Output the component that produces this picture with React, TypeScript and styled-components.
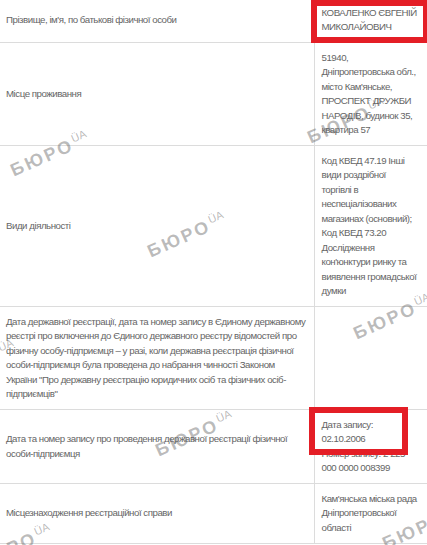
import styled, { createGlobalStyle } from "styled-components";

const GlobalStyle = createGlobalStyle`
  body {
    margin: 0;
    background: #fff;
    overflow: hidden;
  }
`;

const Page = styled.div`
  position: relative;
  width: 427px;
  height: 545px;
  overflow: hidden;
  font-family: "Liberation Sans", Arial, sans-serif;
  font-size: 9.7px;
  letter-spacing: -0.47px;
  color: #656565;
`;

const Table = styled.table`
  border-collapse: collapse;
  table-layout: fixed;
  width: 427px;
  margin-top: -2px;
  font: inherit;
  letter-spacing: inherit;
  color: inherit;
`;

const Row = styled.tr`
  border-bottom: 1px solid #dcdcdc;
`;

const LabelCell = styled.td`
  width: 314px;
  box-sizing: border-box;
  padding: 7.5px 8px 7.5px 6px;
  line-height: 14.5px;
  vertical-align: middle;
`;

const ValueCell = styled.td`
  box-sizing: border-box;
  padding: 7.5px 6px 7.5px 7px;
  line-height: 14.5px;
  vertical-align: middle;
  border-left: 1px solid #dcdcdc;
`;

const ValueLine = styled.div`
  white-space: nowrap;
`;

const Highlight = styled.div<{ $x: number; $y: number; $w: number; $h: number }>`
  position: absolute;
  left: ${(p) => p.$x}px;
  top: ${(p) => p.$y}px;
  width: ${(p) => p.$w}px;
  height: ${(p) => p.$h}px;
  box-sizing: border-box;
  border: 6px solid #e41e26;
  pointer-events: none;
`;

const Watermark = styled.div<{ $x: number; $y: number }>`
  position: absolute;
  left: ${(p) => p.$x}px;
  top: ${(p) => p.$y - 18}px;
  height: 18px;
  line-height: 18px;
  white-space: nowrap;
  transform: rotate(-24deg);
  transform-origin: 0 100%;
  font-family: "Liberation Sans", Arial, sans-serif;
  font-weight: bold;
  font-size: 18px;
  letter-spacing: 2.5px;
  color: rgba(100, 100, 100, 0.44);
  pointer-events: none;

  sup {
    font-size: 11px;
    letter-spacing: 0;
    margin-left: 1px;
    vertical-align: 7px;
    font-weight: normal;
  }
`;

// value lines follow the wrapping of the narrow source column
const rows = [
  {
    label: "Прізвище, ім'я, по батькові фізичної особи",
    value: ["КОВАЛЕНКО ЄВГЕНІЙ", "МИКОЛАЙОВИЧ"],
  },
  {
    label: "Місце проживання",
    value: [
      "51940,",
      "Дніпропетровська обл.,",
      "місто Кам'янське,",
      "ПРОСПЕКТ ДРУЖБИ",
      "НАРОДІВ, будинок 35,",
      "квартира 57",
    ],
  },
  {
    label: "Види діяльності",
    value: [
      "Код КВЕД 47.19 Інші",
      "види роздрібної",
      "торгівлі в",
      "неспеціалізованих",
      "магазинах (основний);",
      "Код КВЕД 73.20",
      "Дослідження",
      "кон'юнктури ринку та",
      "виявлення громадської",
      "думки",
    ],
  },
  {
    label:
      'Дата державної реєстрації, дата та номер запису в Єдиному державному реєстрі про включення до Єдиного державного реєстру відомостей про фізичну особу-підприємця – у разі, коли державна реєстрація фізичної особи-підприємця була проведена до набрання чинності Законом України "Про державну реєстрацію юридичних осіб та фізичних осіб-підприємців"',
    value: [],
  },
  {
    label: "Дата та номер запису про проведення державної реєстрації фізичної особи-підприємця",
    value: ["Дата запису:", "02.10.2006", "Номер запису: 2 225", "000 0000 008399"],
  },
  {
    label: "Місцезнаходження реєстраційної справи",
    value: ["Кам'янська міська рада", "Дніпропетровської", "області"],
  },
];

const marks = [
  { x: 13, y: 175 },
  { x: 150, y: 256 },
  { x: 310, y: 142 },
  { x: 356, y: 338 },
  { x: -60, y: 384 },
  { x: 158, y: 455 },
  { x: 385, y: 548 },
  { x: -24, y: 568 },
];

const App = () => {
  return (
    <Page>
      <GlobalStyle />
      <Table>
        <tbody>
          {rows.map((row) => (
            <Row key={row.label}>
              <LabelCell>{row.label}</LabelCell>
              <ValueCell>
                {row.value.map((line) => (
                  <ValueLine key={line}>{line}</ValueLine>
                ))}
              </ValueCell>
            </Row>
          ))}
        </tbody>
      </Table>

      {marks.map((m) => (
        <Watermark key={`${m.x}-${m.y}`} $x={m.x} $y={m.y}>
          БЮРО<sup>ÜA</sup>
        </Watermark>
      ))}

      <Highlight $x={311} $y={0} $w={118} $h={43} />
      <Highlight $x={309} $y={407} $w={99} $h={48} />
    </Page>
  );
};

export default App;
